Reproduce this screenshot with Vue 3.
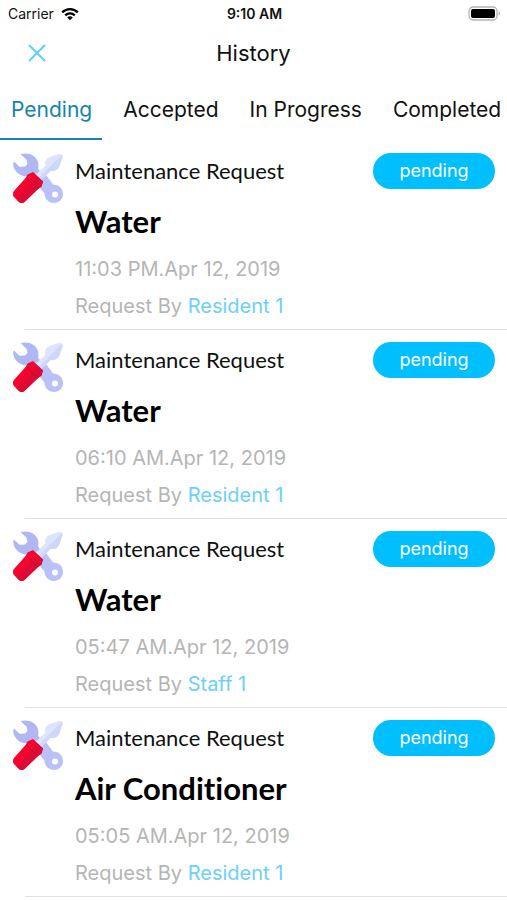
<script setup>
import { ref } from 'vue'

const tabs = ['Pending', 'Accepted', 'In Progress', 'Completed']
const activeTab = ref('Pending')

const requests = [
  { id: 1, title: 'Water', date: '11:03 PM.Apr 12, 2019', by: 'Resident 1' },
  { id: 2, title: 'Water', date: '06:10 AM.Apr 12, 2019', by: 'Resident 1' },
  { id: 3, title: 'Water', date: '05:47 AM.Apr 12, 2019', by: 'Staff 1' },
  { id: 4, title: 'Air Conditioner', date: '05:05 AM.Apr 12, 2019', by: 'Resident 1' }
]
</script>

<template>
  <div class="history">
    <div class="status-bar">
      <div class="carrier">
        <span>Carrier</span>
        <svg width="18" height="14" viewBox="0 0 18 14" aria-hidden="true">
          <g fill="none" stroke="#000" stroke-width="2.3">
            <path d="M1.2 5.4C5.6 1 12.4 1 16.8 5.4" />
            <path d="M4.2 8.4C6.9 5.8 11.1 5.8 13.8 8.4" />
          </g>
          <path d="M6.2 10.4C7.8 9 10.2 9 11.8 10.4L9 13.2Z" />
        </svg>
      </div>
      <span class="clock">9:10 AM</span>
      <svg class="battery" width="33" height="15" viewBox="0 0 33 15" aria-hidden="true">
        <rect x="1" y="1" width="28" height="13" rx="4" fill="#fff" stroke="#b4b4b4" stroke-width="1.3" />
        <rect x="3" y="3" width="24" height="9" rx="2" />
        <path d="M30.6 5.4C32.4 6 32.4 9 30.6 9.6Z" fill="#a9a9a9" />
      </svg>
    </div>

    <header class="header">
      <button class="close" type="button" aria-label="Close">
        <svg width="18" height="18" viewBox="0 0 18 18">
          <path d="M1.5 1.5L16.5 16.5M16.5 1.5L1.5 16.5" stroke="#64cdfb" stroke-width="2" stroke-linecap="round" />
        </svg>
      </button>
      <h1>History</h1>
    </header>

    <nav class="tabs">
      <button
        v-for="tab in tabs"
        :key="tab"
        type="button"
        :class="['tab', { active: tab === activeTab }]"
        @click="activeTab = tab"
      >{{ tab }}</button>
    </nav>

    <ul class="list">
      <li v-for="item in requests" :key="item.id">
        <div class="request">
          <svg class="tools" width="50" height="50" viewBox="0 0 50 50" aria-hidden="true">
            <path fill="#b0b7f3" d="M7.5 1C15-1 23 2 25 9C25.700 11.500 25.500 13.500 25 15.500L36 31L17 23C9 25 1.500 19.500 .4 12.500C.1 10.500 .3 9.500 1 8.500L6.500 13.800L12 13.500L14.500 11L13.500 6.800Z" />
            <path fill="#bac1f8" d="M23 19L33 22L40 31.500C46 31.500 50 35.500 50 41C50 46 46 50 41 50C35.500 50 31.500 45.500 31.500 40.500L20 27Z" />
            <circle cx="42" cy="41.500" r="3" fill="#fff" />
            <path fill="#dfe4fe" d="M46 .8Q49.500 .5 49.500 4L46.500 13Q45 17 41 18L37.500 18L28.500 27L23 21.500L32.500 12.500L32 10Q32.500 5.500 36.500 4Z" />
            <path fill="#cfd6fc" d="M49.200 1.500L49.500 4L46.500 13Q45 17 41 18L37.500 18L28.500 27L26 24.500Z" />
            <path fill="#f3052f" d="M20 19L30 28.500L28.500 33.500L25 36L12 48.500Q8.500 51.500 5.500 48.500L1 44Q-1.200 41 1 38L13 24.500L14.500 21.500Z" />
            <path fill="#dd0a34" d="M25 24L30 28.500L28.500 33.500L25 36L12 48.500Q8.500 51.500 5.500 48.500L3.500 46.500Z" />
            <path d="M13.500 24.500L24.500 36" stroke="#c20731" stroke-width="1" />
          </svg>
          <div class="details">
            <div class="top">
              <span class="kind">Maintenance Request</span>
              <span class="badge">pending</span>
            </div>
            <h2>{{ item.title }}</h2>
            <p>{{ item.date }}</p>
            <p>Request By <a href="#">{{ item.by }}</a></p>
          </div>
        </div>
      </li>
    </ul>
  </div>
</template>

<style>
body {
  margin: 0;
  background: #fff;
}
</style>

<style scoped>
.history {
  font-family: Inter, "Liberation Sans", sans-serif;
  color: #111;
  overflow: hidden;
}

button {
  padding: 0;
  border: 0;
  background: none;
  font: inherit;
  color: inherit;
  cursor: pointer;
}

.status-bar {
  display: grid;
  grid-template-columns: 1fr auto 1fr;
  align-items: center;
  height: 27px;
  padding: 0 6px 0 8px;
  font-size: 14px;
}

.carrier {
  display: flex;
  align-items: center;
  gap: 7px;
}

.clock {
  font-weight: 600;
}

.battery {
  justify-self: end;
}

.header {
  display: grid;
  grid-template-columns: 1fr auto 1fr;
  align-items: center;
  height: 51px;
  padding: 0 28px;
}

.close {
  display: flex;
  justify-self: start;
}

h1 {
  margin: 0;
  font-size: 22px;
  font-weight: 400;
}

.tabs {
  display: flex;
  gap: 31px;
  height: 62px;
  padding-left: 11px;
}

.tab {
  position: relative;
  flex: none;
  font-size: 21px;
}

.active {
  color: #1683ad;
}

.active::after {
  content: "";
  position: absolute;
  right: -10px;
  bottom: 0;
  left: -11px;
  height: 2px;
  background: #1683ad;
}

.list {
  margin: 0;
  padding: 1px 0 0;
  list-style: none;
}

li::after {
  content: "";
  display: block;
  height: 1px;
  margin-left: 25px;
  background: #e2e2e2;
}

.request {
  display: flex;
  gap: 12px;
  padding: 12px 12px 4px 13px;
}

.tools {
  flex: none;
}

.details {
  flex: 1;
}

.top {
  display: flex;
  justify-content: space-between;
  align-items: center;
}

.kind {
  font-family: Lato, sans-serif;
  font-size: 22px;
  line-height: 36px;
}

.badge {
  width: 122px;
  border-radius: 18px;
  background: #00bfff;
  color: #fff;
  font-size: 18px;
  line-height: 36px;
  text-align: center;
}

h2 {
  margin: 10px 0 7px;
  font-family: Lato, sans-serif;
  font-size: 31px;
  font-weight: 700;
  font-variant-ligatures: none;
  line-height: 45px;
  color: #000;
}

p {
  margin: 0;
  font-size: 20px;
  line-height: 37px;
  color: #b5b5b5;
}

a {
  color: #6cd0fb;
  text-decoration: none;
}
</style>
